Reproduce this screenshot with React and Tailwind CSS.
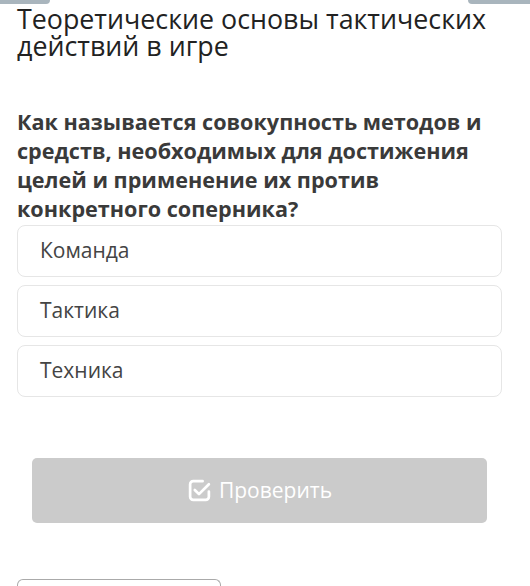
import React from "react";

const options = ["Команда", "Тактика", "Техника"];

const CheckSquareIcon = () => (
  <svg className="w-[25px] h-[25px] shrink-0" viewBox="0 0 24 24" fill="none" stroke="currentColor" strokeWidth="2.6" strokeLinecap="round" strokeLinejoin="round">
    <path d="M15 3H6a3 3 0 0 0-3 3v12a3 3 0 0 0 3 3h12a3 3 0 0 0 3-3v-5" />
    <path d="M7.5 11.5l4 4L21 6" />
  </svg>
);

const App = () => {
  return (
    <div className="w-[530px] h-[586px] overflow-hidden bg-white font-['Open_Sans',sans-serif]">
      <div className="flex justify-between h-[4px]">
        <div className="w-[50px] bg-[#a9b5bd] rounded-br-[6px]" />
        <div className="w-[62px] bg-[#a9b5bd] rounded-bl-[6px]" />
      </div>

      <div className="pl-[17px] pr-[28px]">
        <h1 className="text-[26.8px] leading-[27px] text-[#222] font-normal mt-[1px]">
          Теоретические основы тактических действий в игре
        </h1>

        <p className="mt-[48px] text-[21.6px] leading-[29px] font-bold text-[#3a3a3a]">
          Как называется совокупность методов и средств, необходимых для
          достижения целей и применение их против конкретного соперника?
        </p>

        <div className="mt-[2px] flex flex-col gap-2">
          {options.map((opt, idx) => (
            <div
              key={idx}
              className="h-[52px] flex items-center pl-[22px] border border-[#e6e6e6] rounded-[8px] bg-white text-[21px] text-[#444]"
            >
              {opt}
            </div>
          ))}
        </div>

        <div className="mt-[61px] px-[15px]">
          <button className="w-full h-[65px] rounded-[5px] bg-[#cbcbcb] text-white text-[21px] flex items-center justify-center gap-[7px]">
            <CheckSquareIcon />
            Проверить
          </button>
        </div>

        <div className="mt-[56px] w-[204px] h-[20px] border border-[#aaa] border-b-0 rounded-t-[6px]" />
      </div>
    </div>
  );
};

export default App;
